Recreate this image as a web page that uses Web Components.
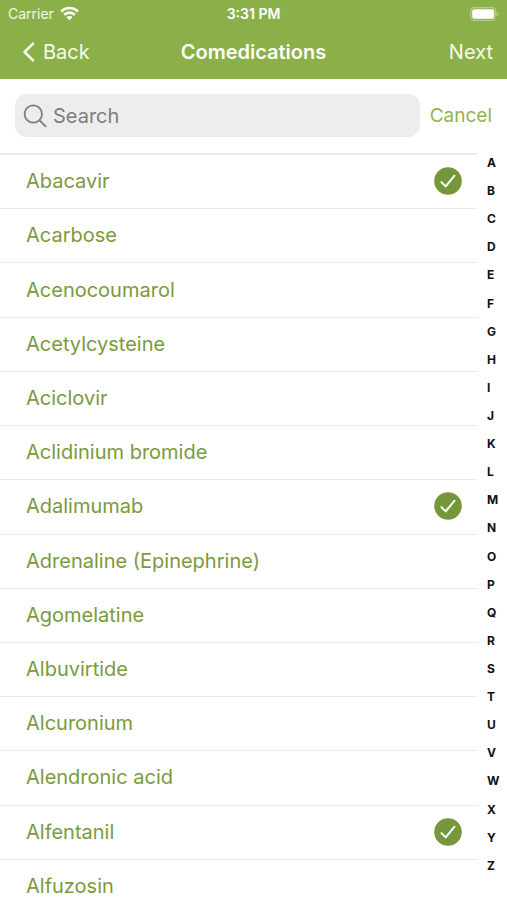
<!DOCTYPE html>
<html lang="en">
<head>
<meta charset="utf-8">
<meta name="viewport" content="width=device-width, initial-scale=1">
<title>Comedications</title>
<style>
  html, body { height: 100%; }
  body { margin: 0; background: #fff; overflow: hidden; font-family: Inter, "Liberation Sans", sans-serif; font-size: 20px; line-height: 24px;
    --bar: #8cb049; --accent: #94b24c; --item: #7b9a3c; --check: #75973a; --line: #ebebeb; }
</style>
</head>
<body>
<medication-screen></medication-screen>
<script>
const define = (name, html, setup) => {
  const template = document.createElement('template');
  template.innerHTML = html;
  customElements.define(name, class extends HTMLElement {
    constructor() {
      super();
      this.attachShadow({ mode: 'open' }).append(template.content.cloneNode(true));
    }
    connectedCallback() { if (setup) setup(this, this.shadowRoot); }
  });
};

define('status-bar', `
  <style>
    :host { display: grid; grid-template-columns: 1fr auto 1fr; align-items: center; height: 27px; padding: 0 8px; color: #fff; font-size: 14px; line-height: 16px; }
    .carrier { display: flex; align-items: center; gap: 6px; color: #f3f8e4; }
    .time { font-weight: 600; }
    .battery { justify-self: end; display: block; }
    svg { display: block; }
  </style>
  <div class="carrier"><span>Carrier</span>
    <svg width="19" height="15" viewBox="0 0 19 15" fill="none" stroke="#fff" stroke-width="2.6" aria-hidden="true">
      <path d="M1.1 5.5C5.8 .9 13.2 .9 17.9 5.5"/>
      <path d="M4.2 8.8C7.2 5.9 11.8 5.9 14.8 8.8"/>
      <path d="M9.5 14.3 6.5 11.2C8.2 9.6 10.8 9.6 12.5 11.2Z" fill="#fff" stroke="none"/>
    </svg>
  </div>
  <span class="time">3:31 PM</span>
  <svg class="battery" width="30" height="14" viewBox="0 0 30 14" aria-hidden="true">
    <rect x="1.7" y=".7" width="25" height="12.6" rx="3.6" fill="none" stroke="#b4cf85" stroke-width="1.2"/>
    <rect x="3.2" y="2.2" width="22" height="9.6" rx="2" fill="#fff"/>
    <path d="M27.9 4.7C29.8 5.4 29.8 8.6 27.9 9.3Z" fill="#b4cf85"/>
  </svg>`);

define('nav-bar', `
  <style>
    :host { display: grid; grid-template-columns: 1fr auto 1fr; align-items: center; height: 50px; padding: 0 14px 2px; color: #fff; }
    button { font: inherit; color: #f7fbe9; background: none; border: 0; padding: 0; display: flex; align-items: center; gap: 8px; cursor: pointer; }
    .back { padding-left: 8px; }
    .next { justify-self: end; }
    h1 { margin: 0; font-size: 20px; line-height: 24px; font-weight: 600; }
  </style>
  <button type="button" class="back"><svg width="13" height="20" viewBox="0 0 13 20" fill="none" stroke="currentColor" stroke-width="2.6" stroke-linecap="round" stroke-linejoin="round" aria-hidden="true"><path d="M11 1.6 2.6 10 11 18.4"/></svg><slot name="back"></slot></button>
  <h1><slot></slot></h1>
  <button type="button" class="next"><slot name="next"></slot></button>`);

define('search-bar', `
  <style>
    :host { display: flex; align-items: center; gap: 10px; padding: 15px 15px 16px; }
    label { flex: 1; min-width: 0; display: flex; align-items: center; gap: 6px; height: 43px; padding: 0 8px; box-sizing: border-box; border-radius: 12px; background: #ededee; color: #7d7d80; }
    svg { flex: none; }
    input { flex: 1; min-width: 0; font: inherit; color: #333; background: none; border: 0; padding: 0; outline: 0; appearance: none; }
    input::placeholder { color: #7d7d80; opacity: 1; }
    button { font: inherit; font-size: 19px; color: var(--accent); background: none; border: 0; padding: 0; cursor: pointer; }
  </style>
  <label>
    <svg width="24" height="24" viewBox="0 0 24 24" fill="none" stroke="currentColor" stroke-width="1.8" stroke-linecap="round" aria-hidden="true"><circle cx="10.3" cy="10" r="8.7"/><path d="M16.6 16.4 22.6 22.3"/></svg>
    <input type="search" placeholder="Search" aria-label="Search">
  </label>
  <button type="button">Cancel</button>`);

define('medication-row', `
  <style>
    :host { display: grid; border-bottom: 1px solid var(--line); }
    label { display: flex; align-items: center; justify-content: space-between; padding: 0 15px 1px 26px; color: var(--item); cursor: pointer; }
    .tick { display: grid; flex: none; }
    input, svg { grid-area: 1 / 1; width: 28px; height: 28px; margin: 0; }
    input { opacity: 0; }
    svg { pointer-events: none; visibility: hidden; }
    input:checked + svg { visibility: visible; }
  </style>
  <label><span><slot></slot></span>
    <span class="tick"><input type="checkbox">
      <svg viewBox="0 0 28 28" aria-hidden="true"><circle cx="14" cy="14" r="13.8" fill="var(--check)"/><path d="M7.4 15.1 11.7 19.4 20.5 8.7" fill="none" stroke="#fff" stroke-width="2" stroke-linecap="round" stroke-linejoin="round"/></svg>
    </span>
  </label>`, (host, root) => { root.querySelector('input').checked = host.hasAttribute('selected'); });

define('medication-list', `
  <style>
    :host { display: block; overflow-y: auto; scrollbar-width: none; border-top: 2px solid var(--line); }
    div { display: grid; grid-auto-rows: 1fr; min-height: 759px; }
  </style>
  <div><slot></slot></div>`);

define('letter-index', `
  <style>
    :host { display: block; }
    nav { display: flex; flex-direction: column; min-height: 731px; }
    a { flex: 1; display: flex; align-items: center; padding-left: 10px; color: #111; font-size: 12px; line-height: 16px; font-weight: 700; text-decoration: none; }
  </style>
  <nav aria-label="Letters"></nav>`, (host, root) => {
    root.querySelector('nav').innerHTML = [...'ABCDEFGHIJKLMNOPQRSTUVWXYZ'].map(c => `<a href="#${c}">${c}</a>`).join('');
  });

define('medication-screen', `
  <style>
    :host { display: flex; flex-direction: column; height: 100%; }
    header { background: var(--bar); }
    main { flex: 1; min-height: 0; display: grid; grid-template-columns: 1fr 30px; grid-template-rows: 100%; }
    letter-index { margin-top: -4px; }
  </style>
  <header>
    <status-bar></status-bar>
    <nav-bar><span slot="back">Back</span>Comedications<span slot="next">Next</span></nav-bar>
  </header>
  <search-bar></search-bar>
  <main>
    <medication-list>
      <medication-row selected>Abacavir</medication-row>
      <medication-row>Acarbose</medication-row>
      <medication-row>Acenocoumarol</medication-row>
      <medication-row>Acetylcysteine</medication-row>
      <medication-row>Aciclovir</medication-row>
      <medication-row>Aclidinium bromide</medication-row>
      <medication-row selected>Adalimumab</medication-row>
      <medication-row>Adrenaline (Epinephrine)</medication-row>
      <medication-row>Agomelatine</medication-row>
      <medication-row>Albuvirtide</medication-row>
      <medication-row>Alcuronium</medication-row>
      <medication-row>Alendronic acid</medication-row>
      <medication-row selected>Alfentanil</medication-row>
      <medication-row>Alfuzosin</medication-row>
    </medication-list>
    <letter-index></letter-index>
  </main>`);
</script>
</body>
</html>
